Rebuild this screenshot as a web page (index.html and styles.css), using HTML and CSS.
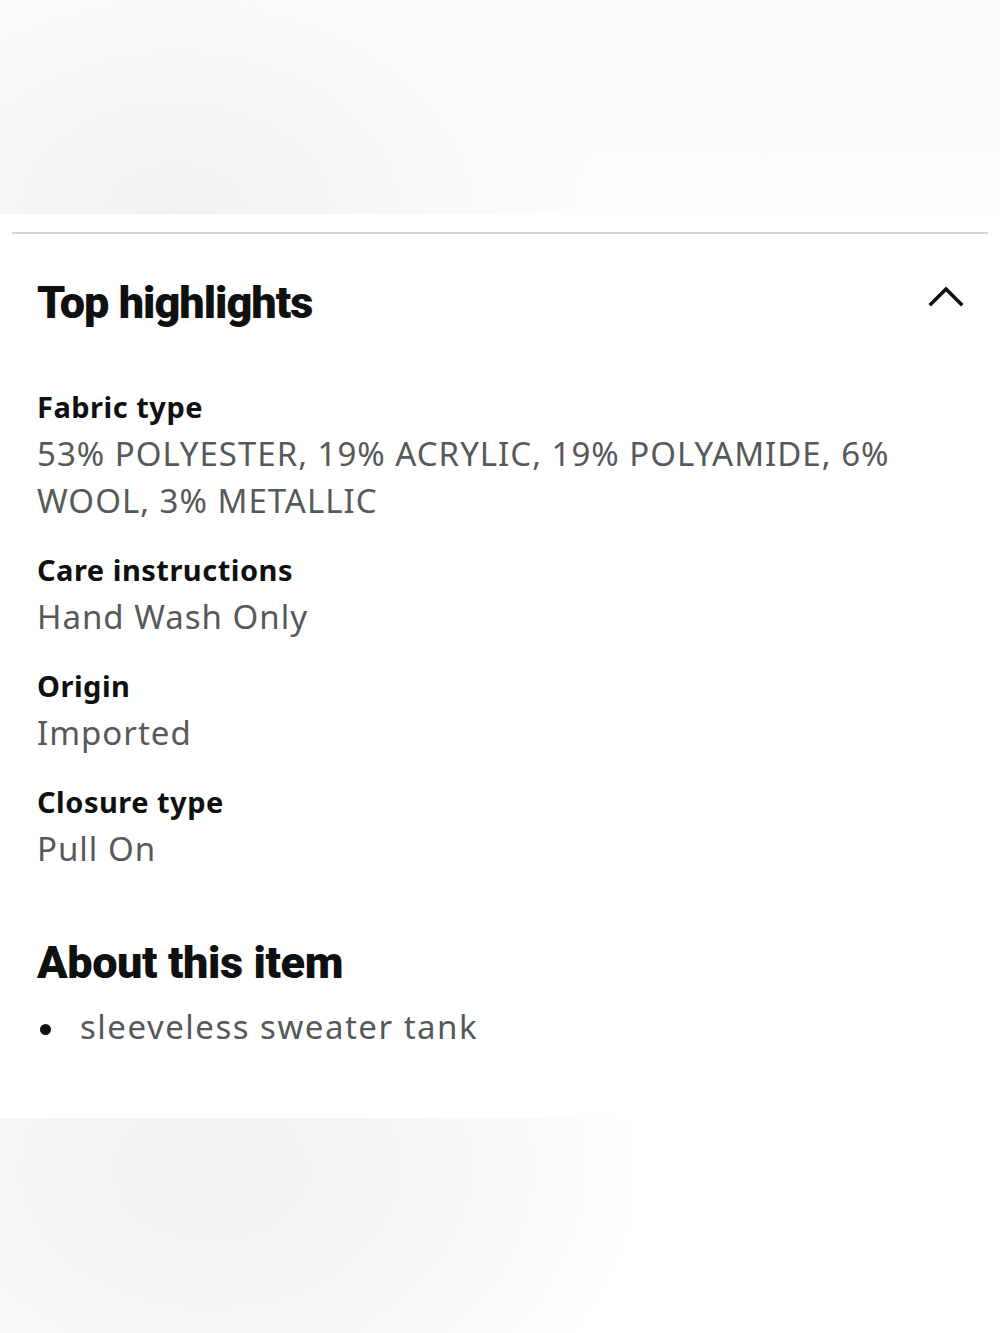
FILE: index.html
```html
<!DOCTYPE html>
<html lang="en">
<head>
<meta charset="utf-8">
<title>Top highlights</title>
<link rel="stylesheet" href="styles.css">
</head>
<body>
<div class="hero"></div>
<main class="panel">
  <div class="divider"></div>
  <div class="section-head">
    <h2 class="title">Top highlights</h2>
    <svg class="chevron" width="36" height="22" viewBox="0 0 36 22" aria-hidden="true">
      <path d="M3 19 L18 4 L33 19" fill="none" stroke="#0f1111" stroke-width="3.6" stroke-linecap="square"/>
    </svg>
  </div>
  <dl class="specs">
    <div class="spec">
      <dt class="label">Fabric type</dt>
      <dd class="value">53% POLYESTER, 19% ACRYLIC, 19% POLYAMIDE, 6% WOOL, 3% METALLIC</dd>
    </div>
    <div class="spec">
      <dt class="label">Care instructions</dt>
      <dd class="value">Hand Wash Only</dd>
    </div>
    <div class="spec">
      <dt class="label">Origin</dt>
      <dd class="value">Imported</dd>
    </div>
    <div class="spec">
      <dt class="label">Closure type</dt>
      <dd class="value">Pull On</dd>
    </div>
  </dl>
  <h2 class="title about">About this item</h2>
  <ul class="bullets">
    <li class="bullet">sleeveless sweater tank</li>
  </ul>
</main>
<div class="footer-art"></div>
</body>
</html>
```
FILE: styles.css
```css
html, body {
  margin: 0;
  padding: 0;
  background: #ffffff;
}
body {
  font-family: "Noto Sans", Roboto, "Liberation Sans", Arial, sans-serif;
  color: #0f1111;
  width: 1000px;
  height: 1333px;
  overflow: hidden;
}
.hero {
  height: 214px;
  background:
    radial-gradient(ellipse 420px 300px at 175px 214px, #f1f1f1 0%, #f5f5f5 35%, #fafafa 70%, rgba(255,255,255,0) 100%),
    linear-gradient(180deg, #fbfbfb 0%, #fdfdfd 100%);
}
.panel {
  padding: 20px 0 68px;
}
.divider {
  height: 2px;
  margin: -2px 12px 0;
  background: #d6d6d6;
}
.section-head {
  height: 138px;
  display: flex;
  align-items: center;
  justify-content: space-between;
  padding: 0 36px 0 37px;
}
.title {
  margin: 0;
  font-family: Roboto, "Noto Sans", sans-serif;
  font-size: 45px;
  font-weight: 900;
  letter-spacing: -1px;
  line-height: 56px;
  color: #0f1111;
}
.chevron {
  display: block;
  margin-top: -14px;
}
.specs {
  margin: 12px 0 0;
  padding: 0 37px;
  display: flex;
  flex-direction: column;
  gap: 23px;
}
.spec {
  display: flex;
  flex-direction: column;
}
.label {
  font-size: 29px;
  font-weight: 700;
  letter-spacing: 0.5px;
  line-height: 46px;
  color: #0f1111;
}
.value {
  margin: 0;
  font-size: 33px;
  letter-spacing: 1px;
  line-height: 47px;
  color: #565959;
  max-width: 900px;
}
.about {
  margin: 63px 37px 0;
  letter-spacing: -0.4px;
}
.bullets {
  list-style: none;
  margin: 12px 0 0;
  padding: 0 37px;
}
.bullet {
  position: relative;
  padding-left: 43px;
  font-size: 33px;
  letter-spacing: 1.5px;
  line-height: 47px;
  color: #565959;
}
.bullet::before {
  content: "";
  position: absolute;
  left: 3px;
  top: 21px;
  width: 11px;
  height: 11px;
  border-radius: 50%;
  background: #0f1111;
}
.footer-art {
  height: 216px;
  background:
    radial-gradient(ellipse 430px 320px at 210px 50px, #f1f1f1 0%, #f4f4f4 35%, #f9f9f9 70%, rgba(255,255,255,0) 100%);
}
```
